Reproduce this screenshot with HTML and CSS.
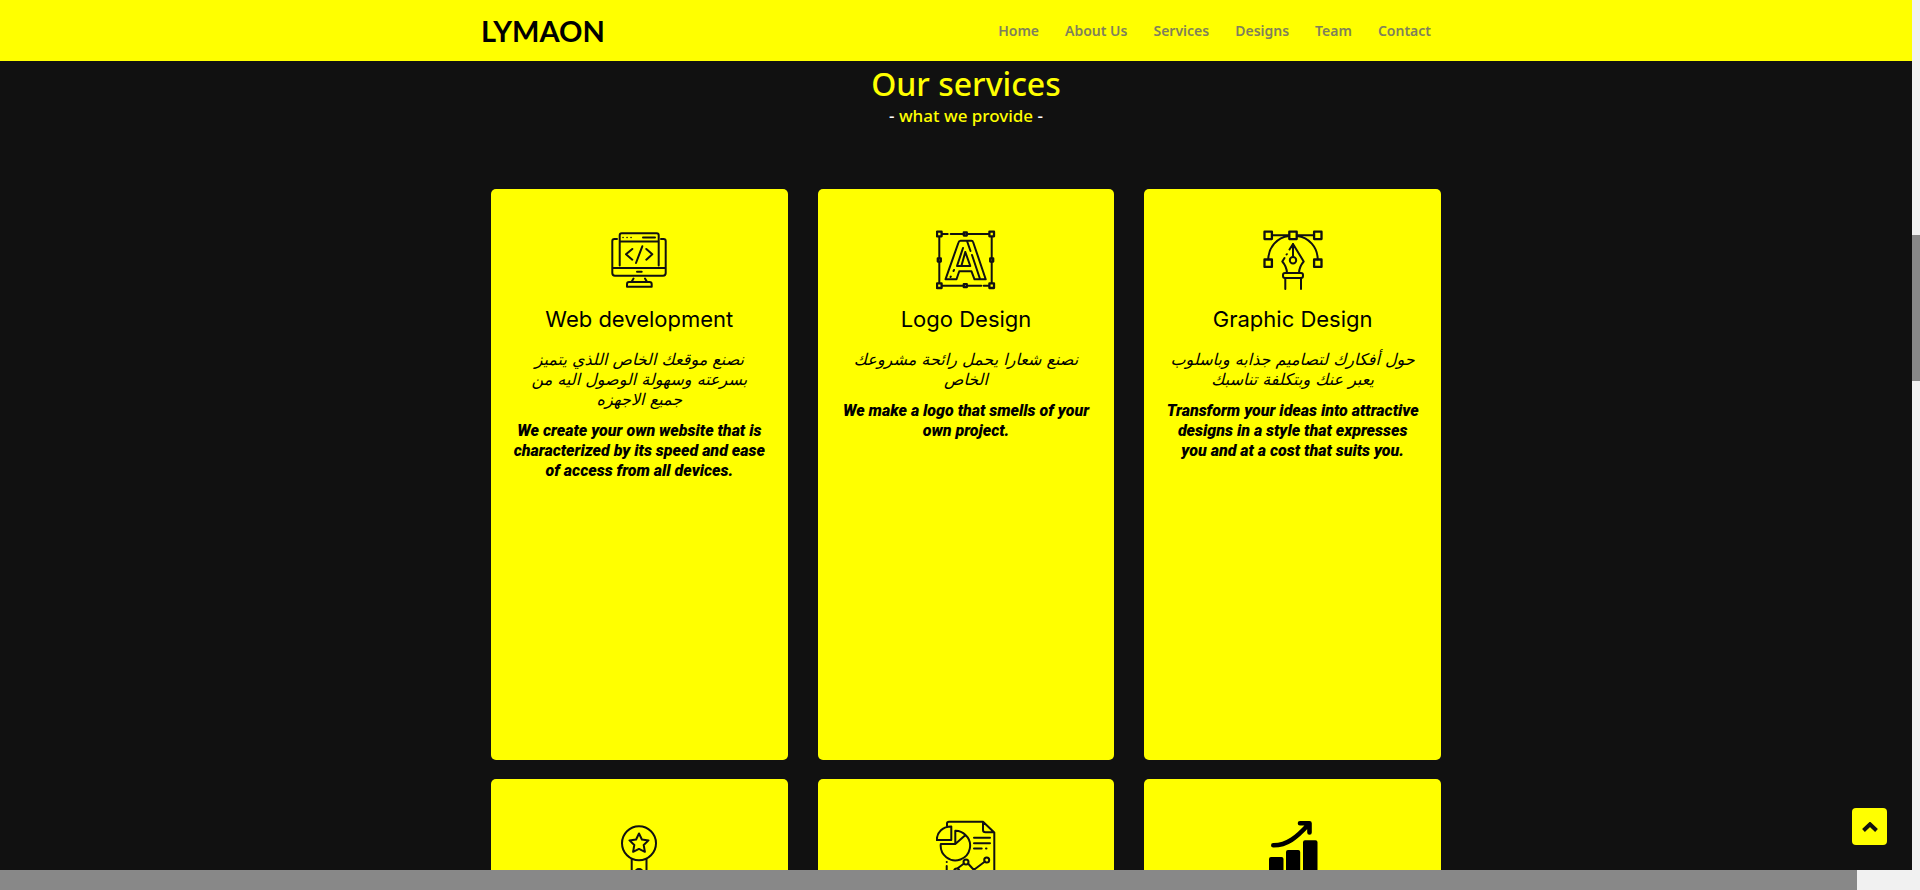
FILE: index.html
```html
<!DOCTYPE html>
<html lang="en">
<head>
<meta charset="utf-8">
<title>LYMAON</title>
<link rel="stylesheet" href="styles.css">
</head>
<body>
<div class="viewport">
  <header class="header">
    <div class="header-inner">
      <a class="logo" href="#">LYMAON</a>
      <nav class="nav">
        <a href="#home">Home</a>
        <a href="#about">About Us</a>
        <a href="#services">Services</a>
        <a href="#designs">Designs</a>
        <a href="#team">Team</a>
        <a href="#contact">Contact</a>
      </nav>
    </div>
  </header>
  <main class="services" id="services">
    <h1 class="heading">Our services</h1>
    <p class="subheading"><span class="dash">-</span> what we provide <span class="dash">-</span></p>
    <div class="cards">
      <article class="card">
        <svg class="icon" viewBox="0 0 60 60" aria-hidden="true">
          <path d="M8 9H5.500Q3.300 9 3.300 11V43Q3.300 45.700 6 45.700H54Q56.700 45.700 56.700 43V11Q56.700 9 54.500 9H52M10.700 35.500V5.300Q10.700 3.300 12.700 3.300H47.700Q49.700 3.300 49.700 5.300V35.500M10.700 11.400H49.700M3.300 38H56.700M28 41.800H32.700M34 7.400H46M24.500 48.500L22.800 51.500M36 48.500L37.800 51.500M20 52H40.500Q42.700 52 42.700 54.300V56.700H18V54.300Q18 52 20 52ZM23.300 19L17 24.300L23.300 29.700M33.300 16.300L27 33M37.300 19L43.300 24.300L37.300 29.700"/>
          <path class="dots" d="M14 7.400h.1M18 7.400h.1M22 7.400h.1"/>
        </svg>
        <h2 class="title">Web development</h2>
        <p class="arabic" lang="ar" dir="rtl">نصنع موقعك الخاص اللذي يتميز<br>بسرعته وسهولة الوصول اليه من<br>جميع الاجهزه</p>
        <p class="english">We create your own website that is<br>characterized by its speed and ease<br>of access from all devices.</p>
      </article>
      <article class="card">
        <svg class="icon" viewBox="0 0 60 60" aria-hidden="true">
          <path d="M6 4H11.700M14.700 4H27.500M31.200 4H53M3.300 7V28M3.300 32V53M55.700 7V28M55.700 32V53M6 55.700H27.500M31.200 55.700H45.300M47.700 55.700H53"/>
          <path class="bold" d="M1 1.700h4.600v4.600H1zM53.400 1.700H58v4.600h-4.600zM1 53.400h4.600V58H1zM53.400 53.400H58V58h-4.600zM27.800 2.500h3v3h-3zM27.800 54.200h3v3h-3zM1.800 28.500h3v3h-3zM54.200 28.500h3v3h-3z"/>
          <path d="M24.500 10.700H35.500Q36.700 10.700 37 11.700L49.700 49.300H38.500L35.500 41.300H23.300M20.500 49.300H9.500L22.500 12.500Q23 10.700 24.500 10.700M20.500 49.300L23 42M17.500 41L18 40M14.800 46.500L14.500 47M31 11L34.500 21M36 25L44 49M29.300 22L34.300 36H21L27 18M29.300 22L25.500 35.500"/>
        </svg>
        <h2 class="title">Logo Design</h2>
        <p class="arabic" lang="ar" dir="rtl">نصنع شعارا يحمل رائحة مشروعك<br>الخاص</p>
        <p class="english">We make a logo that smells of your<br>own project.</p>
      </article>
      <article class="card">
        <svg class="icon" viewBox="0 0 60 60" aria-hidden="true">
          <path class="bold" d="M1.500 1.700h7.400v7.400H1.500zM26.300 1.700h7.400v7.400h-7.400zM51.100 1.700h7.400v7.400h-7.400zM1.500 29.500h7.400v7.400H1.500zM51.100 29.500h7.400v7.400h-7.400z"/>
          <path d="M9 5.300H26M34 5.300H51M26 6C14 7.500 5.500 17 5.300 29.300M34 6C46 7.500 54.500 17 54.700 29.300M30 14V27M30 14L40.700 31.500Q36.300 36.500 36 43M24 43Q23.700 36.500 19.300 31.500L21.500 28M26.500 19.500L30 14M23.600 24.500L23.800 24.200"/>
          <circle cx="30" cy="30.300" r="3.200"/>
          <rect x="20" y="43" width="20" height="5" rx="2"/>
          <path d="M22.300 48V59M38 48V59"/>
        </svg>
        <h2 class="title">Graphic Design</h2>
        <p class="arabic" lang="ar" dir="rtl">حول أفكارك لتصاميم جذابه وباسلوب<br>يعبر عنك وبتكلفة تناسبك</p>
        <p class="english">Transform your ideas into attractive<br>designs in a style that expresses<br>you and at a cost that suits you.</p>
      </article>
      <article class="card">
        <svg class="icon" viewBox="0 0 60 60" aria-hidden="true">
          <circle cx="30" cy="23.300" r="17"/>
          <path d="M30 13.500L32.900 19.500L39.500 20.400L34.700 25L35.900 31.800L30 28.900L24.100 31.800L25.300 25L20.500 20.400L27.100 19.500ZM22.700 39V60M37.500 39V60"/>
          <circle cx="30" cy="53" r="4"/>
        </svg>
      </article>
      <article class="card">
        <svg class="icon" viewBox="0 0 60 60" aria-hidden="true">
          <path d="M11 6V3.500Q11 1.700 13 1.700H47L58.300 12.500V60M47 1.700V10Q47 12.300 49.500 12.300H58M15.300 6.500V20H.8C.8 12 7 6.500 15.300 6.500ZM19.300 10.700V24L29.500 15Q25 10.500 19.300 10.700ZM19.300 24H4.800A14.700 14.700 0 1 0 29.500 15M38 17.700H54M38 23.300H54M38 28.500H45.700M50 28.500H50.500M10.700 42H10.800M10.700 46V60M22 48L28 43.500M32 43.500L37 49H39L49 41.500"/>
          <circle cx="30" cy="42" r="2.500"/><circle cx="50.700" cy="40" r="2.500"/><circle cx="20.700" cy="51" r="2.500"/>
        </svg>
      </article>
      <article class="card">
        <svg class="icon" viewBox="0 0 60 60" aria-hidden="true">
          <path class="arrow" d="M10.300 25.300C24 25.500 34 17 45 5M37 3.300H46.500V12.500"/>
          <path class="solid" d="M8 37H18.500Q20.500 37 20.500 39V60H6V39Q6 37 8 37ZM25 30H35.200Q37.200 30 37.200 32V60H23V32Q23 30 25 30ZM42 20.300H52.500Q54.500 20.300 54.500 22.300V60H40V22.300Q40 20.300 42 20.300Z"/>
        </svg>
      </article>
    </div>
  </main>
  <button class="to-top" type="button" aria-label="Back to top">
    <svg viewBox="0 0 16 10" width="16" height="10" aria-hidden="true"><path d="M1.500 8.500L8 2.300L14.500 8.500"/></svg>
  </button>
</div>
<div class="track-y"><div class="thumb-y"></div></div>
<div class="track-x"><div class="thumb-x"></div></div>
</body>
</html>
```
FILE: styles.css
```css
* { box-sizing: border-box; }
body {
  margin: 0;
  height: 100vh;
  display: grid;
  grid-template-columns: minmax(0, 1fr) 8px;
  grid-template-rows: minmax(0, 1fr) 20px;
  background: #f1f1f1;
  font-family: "Noto Sans", sans-serif;
}
h1, h2, p { margin: 0; }
a { text-decoration: none; }

.viewport {
  position: relative;
  overflow: hidden;
  background: #111;
}
.header { background: #ff0; }
.header-inner {
  max-width: 950px;
  height: 61px;
  margin: 0 auto;
  display: flex;
  align-items: center;
  justify-content: space-between;
}
.logo {
  color: #000;
  font: 700 29px/40px Lato, sans-serif;
}
.nav { display: flex; gap: 26px; }
.nav a {
  color: #807f5c;
  font: 600 14px/20px "Noto Sans", sans-serif;
}

.services {
  padding-left: 20px;
  text-align: center;
  color: #ff0;
}
.heading { font-size: 32px; font-weight: 500; line-height: 46px; }
.subheading { font-size: 17px; font-weight: 500; line-height: 18px; }
.dash { color: #fff; }

.cards {
  max-width: 950px;
  margin: 64px auto 0;
  display: grid;
  grid-template-columns: repeat(3, minmax(0, 1fr));
  gap: 19px 30px;
}
.card {
  min-height: 571px;
  padding: 41px 16px;
  border-radius: 5px;
  background: #ff0;
  color: #000;
}
.icon {
  display: block;
  width: 60px;
  height: 60px;
  margin: 0 auto;
  fill: none;
  stroke: #111;
  stroke-width: 2;
  stroke-linecap: round;
  stroke-linejoin: round;
}
.icon .bold { stroke-width: 2.300; }
.icon .dots { stroke-width: 1.500; }
.icon .arrow { stroke: #000; stroke-width: 4.600; }
.icon .solid { fill: #000; stroke: none; }
.title { margin-top: 14px; font: 400 22px/30px Inter, sans-serif; }
.arabic { margin-top: 16px; font: italic 400 16px/20px "DejaVu Sans", sans-serif; }
.english { margin-top: 11px; font: italic 900 16px/20px Roboto, sans-serif; }

.to-top {
  position: absolute;
  right: 25px;
  bottom: 25px;
  width: 35px;
  height: 37px;
  padding: 0;
  border: 0;
  border-radius: 4px;
  background: #ff0;
  display: grid;
  place-items: center;
}
.to-top path { fill: none; stroke: #111; stroke-width: 4; }

.track-y { padding-top: 235px; }
.thumb-y { height: 146px; background: #888; }
.track-x { grid-column: 1 / -1; }
.thumb-x { width: 96.7%; height: 20px; background: #888; }
```
